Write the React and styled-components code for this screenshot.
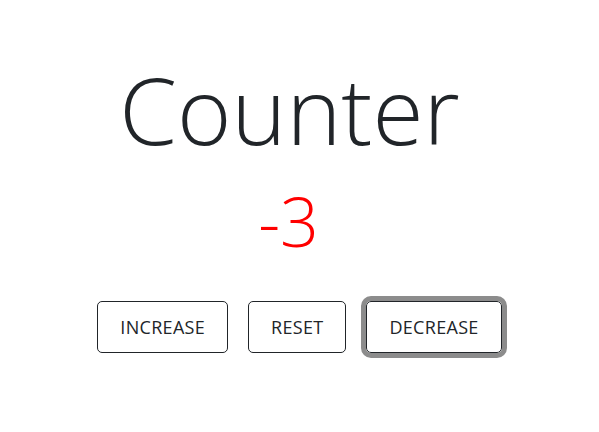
import React, { useState } from 'react';
import styled, { createGlobalStyle } from 'styled-components';

const GlobalStyle = createGlobalStyle`
  body {
    margin: 0;
    background: #fff;
    font-family: "Open Sans", "Liberation Sans", sans-serif;
    color: #212529;
  }
`

const Page = styled.div`
  display: flex;
  flex-direction: column;
  align-items: center;
  padding-top: 54px;
  padding-bottom: 40px;
`

const Title = styled.h1`
  margin: 0 20px 0 0;
  font-size: 93px;
  font-weight: 300;
  line-height: 1.2;
  color: #212529;
`

const Count = styled.h2`
  margin: 14px 22px 0 0;
  font-size: 68px;
  font-weight: 300;
  line-height: 1.2;
  color: ${props => (props.$value < 0 ? '#ff0000' : props.$value > 0 ? '#008000' : '#212529')};
`

const Buttons = styled.div`
  display: flex;
  gap: 20px;
  margin-top: 40px;
`

const Button = styled.button`
  height: 52px;
  padding: 0 22px;
  background: #fff;
  border: 1px solid #212529;
  border-radius: 5px;
  font-family: "Open Sans", "Liberation Sans", sans-serif;
  font-size: 18px;
  letter-spacing: 0.3px;
  color: #212529;
  text-transform: uppercase;
  cursor: pointer;
  outline: ${props => (props.$focused ? '5px solid #8c8c8c' : 'none')};
  outline-offset: 0;
`

function App() {
    const [count, setCount] = useState(-3)
    const [focused, setFocused] = useState('decrease')

    return (
        <Page>
            <GlobalStyle />
            <Title>Counter</Title>
            <Count $value={count}>{count}</Count>
            <Buttons>
                <Button $focused={focused === 'increase'} onClick={() => { setCount(count + 1); setFocused('increase') }}>Increase</Button>
                <Button $focused={focused === 'reset'} onClick={() => { setCount(0); setFocused('reset') }}>Reset</Button>
                <Button $focused={focused === 'decrease'} onClick={() => { setCount(count - 1); setFocused('decrease') }}>Decrease</Button>
            </Buttons>
        </Page>
    )
}

export default App
